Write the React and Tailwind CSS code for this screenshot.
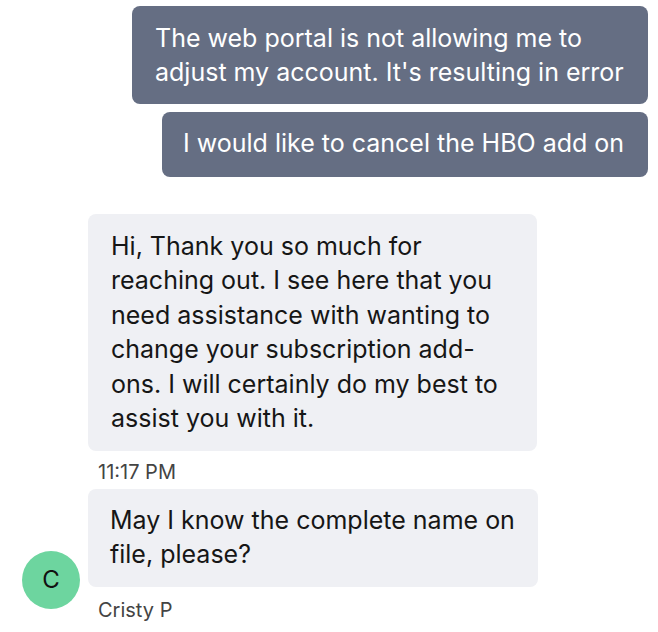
export default function App() {
  const font = { fontFamily: "Inter, 'Noto Sans', sans-serif" };
  return (
    <div className="w-[658px] h-[632px] bg-white overflow-hidden" style={font}>
      <div className="flex flex-col items-end pr-[10px] pt-[6px] gap-[8px]">
        <div className="w-[516px] bg-[#656e83] text-white rounded-[8px] pl-[23px] pr-[18px] pt-[15px] pb-[15px] text-[25px] leading-[34px]">
          The web portal is not allowing me to<br />adjust my account. It's resulting in error
        </div>
        <div className="w-[486px] bg-[#656e83] text-white rounded-[8px] pl-[21px] pt-[14px] pb-[17px] text-[25px] leading-[34px] whitespace-nowrap">
          I would like to cancel the HBO add on
        </div>
      </div>
      <div className="pl-[88px] pt-[37px]">
        <div className="w-[449px] bg-[#eff0f4] text-[#161616] rounded-[8px] pl-[23px] pr-[10px] pt-[15px] pb-[16px] text-[25px] leading-[34.4px] whitespace-nowrap">
          Hi, Thank you so much for<br />
          reaching out. I see here that you<br />
          need assistance with wanting to<br />
          change your subscription add-<br />
          ons. I will certainly do my best to<br />
          assist you with it.
        </div>
        <div className="pl-[10px] pt-[9px] pb-[5px] text-[20px] leading-[24px] text-[#444]">11:17 PM</div>
      </div>
      <div className="flex items-start pl-[22px]">
        <div className="w-[58px] h-[58px] shrink-0 rounded-full bg-[#6dd59f] flex items-center justify-center text-[24px] text-[#111] mt-[62px] mr-[8px]">C</div>
        <div>
          <div className="w-[450px] bg-[#eff0f4] text-[#161616] rounded-[8px] pl-[22px] pr-[10px] pt-[14px] pb-[16px] text-[25px] leading-[34px] whitespace-nowrap">
            May I know the complete name on<br />file, please?
          </div>
          <div className="pl-[10px] pt-[11px] text-[20px] leading-[24px] text-[#444]">Cristy P</div>
        </div>
      </div>
    </div>
  );
}
